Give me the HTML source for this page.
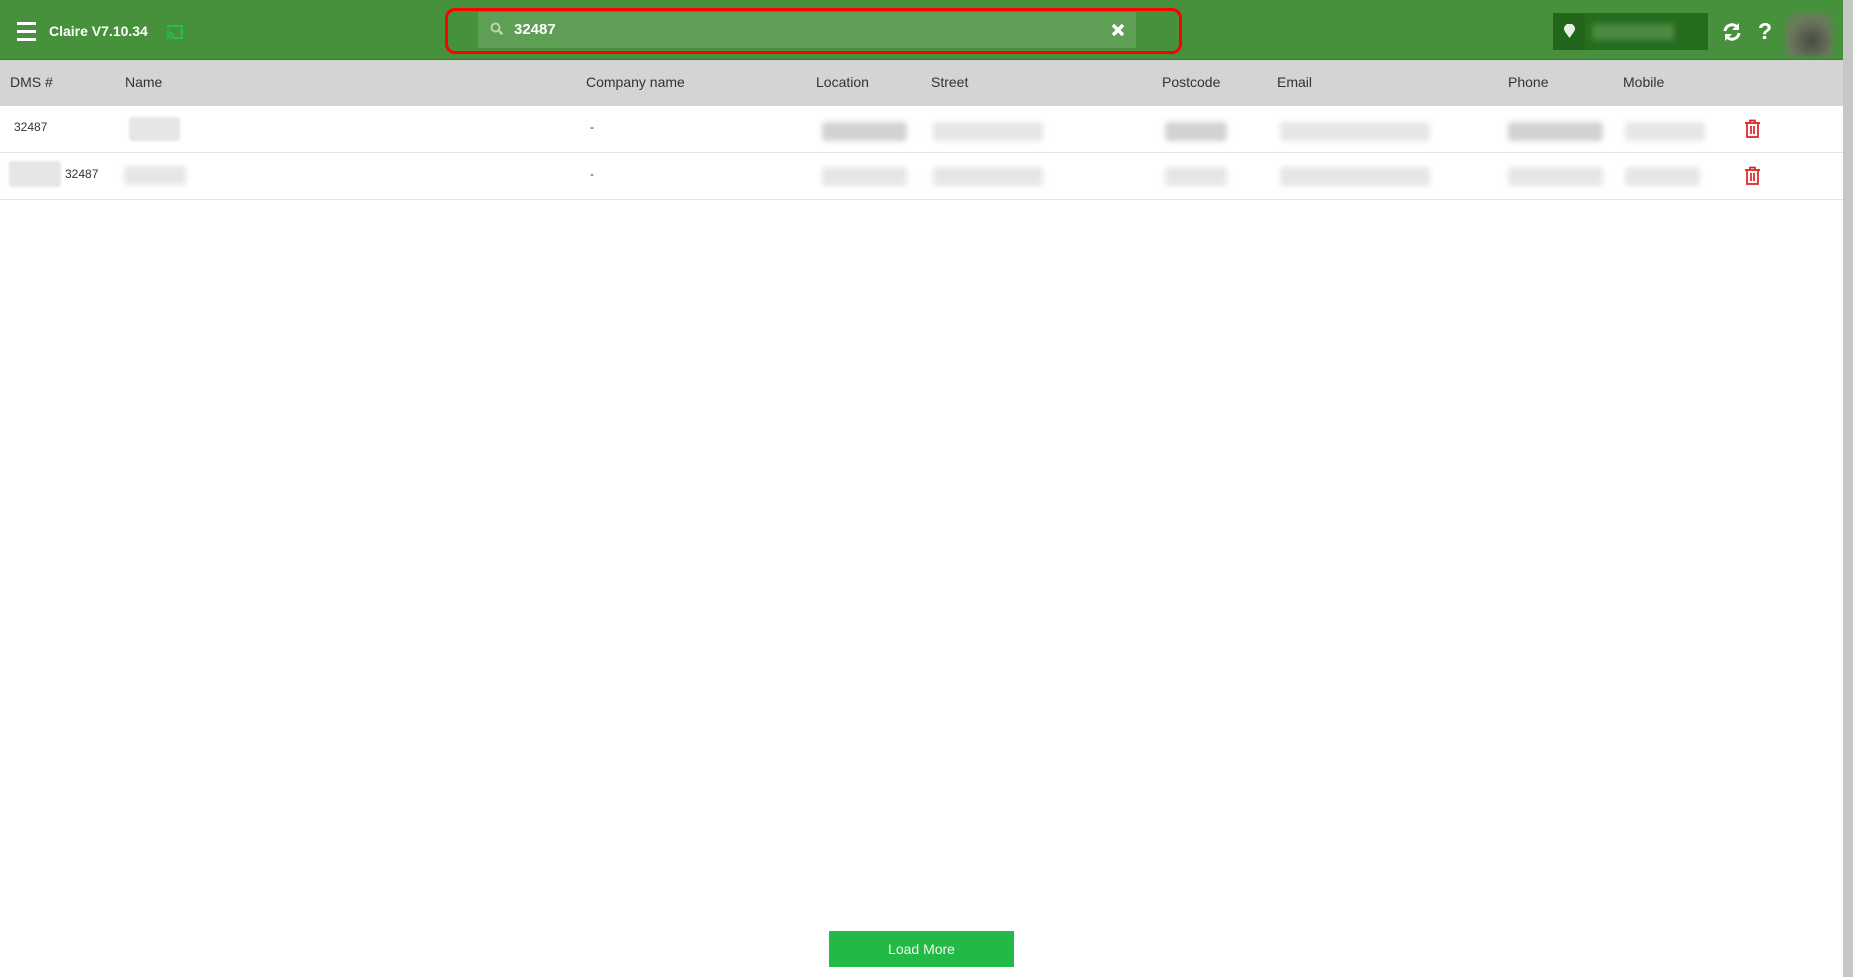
<!DOCTYPE html>
<html><head><meta charset="utf-8"><style>
*{margin:0;padding:0;box-sizing:border-box}
body{width:1853px;height:977px;overflow:hidden;background:#fff;font-family:"Liberation Sans",sans-serif;position:relative;color:#333}
.hdr{position:absolute;left:0;top:0;width:1843px;height:60px;background:#47913c;border-bottom:1px solid #3a7d30}
.abs{position:absolute}
.th{position:absolute;top:60px;left:0;width:1843px;height:46px;background:#d4d4d4}
.th span{position:absolute;top:14px;font-size:14px;color:#333}
.row{position:absolute;left:0;width:1843px;height:47px;border-bottom:1px solid #e4e4e4}
.bl{position:absolute;height:19px;background:#e6e6e6;filter:blur(3px);border-radius:3px}
.dk{background:#d2d2d2}
.td{position:absolute;font-size:12px;color:#333}
.sb{position:absolute;left:1843px;top:0;width:10px;height:977px;background:#c6c6c6}
</style></head><body>
<div class="hdr">
  <div class="abs" style="left:17px;top:22px;width:19px;height:3px;background:#fff"></div>
  <div class="abs" style="left:17px;top:30px;width:19px;height:3px;background:#fff"></div>
  <div class="abs" style="left:17px;top:38px;width:19px;height:3px;background:#fff"></div>
  <div class="abs" style="left:49px;top:23px;color:#fff;font-weight:bold;font-size:14px">Claire V7.10.34</div>
  <svg class="abs" style="left:166px;top:24px" width="18" height="16" viewBox="0 0 18 16"><path d="M2 5V2h14v12H9" fill="none" stroke="#22c04a" stroke-width="2"/><path d="M1 8a7 7 0 0 1 7 7M1 11a4 4 0 0 1 4 4" fill="none" stroke="#22c04a" stroke-width="2"/><circle cx="1.5" cy="14.5" r="1.3" fill="#22c04a"/></svg>
  <div class="abs" style="left:445px;top:8px;width:737px;height:46px;border:3px solid #f00;border-radius:10px"></div>
  <div class="abs" style="left:478px;top:12px;width:658px;height:36px;background:#5f9e55"></div>
  <svg class="abs" style="left:490px;top:22px" width="14" height="14" viewBox="0 0 14 14"><circle cx="5.5" cy="5.5" r="4" fill="none" stroke="#b9d6b3" stroke-width="2"/><path d="M8.5 8.5l4 4" stroke="#b9d6b3" stroke-width="2.5"/></svg>
  <div class="abs" style="left:514px;top:21px;color:#fff;font-weight:bold;font-size:15px">32487</div>
  <svg class="abs" style="left:1111px;top:23px" width="14" height="14" viewBox="0 0 14 14"><path d="M2 2l10 10M12 2L2 12" stroke="#fff" stroke-width="3.5"/></svg>
  <div class="abs" style="left:1553px;top:13px;width:155px;height:37px;background:#256d1e"></div>
  <div class="abs" style="left:1553px;top:13px;width:32px;height:37px;background:#22651b"></div>
  <svg class="abs" style="left:1564px;top:24px" width="11" height="14" viewBox="0 0 11 14"><path d="M5.5 14C2 9 0 7 0 5a5.5 5.5 0 0 1 11 0c0 2-2 4-5.5 9z" fill="#e8f0e6"/></svg>
  <div class="abs" style="left:1592px;top:24px;width:82px;height:16px;background:#4c8a43;filter:blur(3px)"></div>
  <svg class="abs" style="left:1722px;top:22px" width="20" height="20" viewBox="0 0 20 20"><path d="M3 9a7 7 0 0 1 12-4" fill="none" stroke="#fff" stroke-width="3"/><path d="M17 1v7h-7z" fill="#fff"/><path d="M17 11a7 7 0 0 1-12 4" fill="none" stroke="#fff" stroke-width="3"/><path d="M3 19v-7h7z" fill="#fff"/></svg>
  <div class="abs" style="left:1758px;top:18px;color:#fff;font-weight:bold;font-size:23px">?</div>
  <div class="abs" style="left:1786px;top:13px;width:46px;height:43px;background:radial-gradient(circle at 55% 65%,#4a4a44,#6d7a5e 60%,#4e8a45);filter:blur(2px)"></div>
</div>
<div class="th">
  <span style="left:10px">DMS #</span><span style="left:125px">Name</span><span style="left:586px">Company name</span><span style="left:816px">Location</span><span style="left:931px">Street</span><span style="left:1162px">Postcode</span><span style="left:1277px">Email</span><span style="left:1508px">Phone</span><span style="left:1623px">Mobile</span>
</div>
<div class="row" style="top:106px">
  <div class="td" style="left:14px;top:14px">32487</div>
  <div class="bl" style="left:129px;top:11px;width:51px;height:24px;filter:blur(1px)"></div>
  <div class="td" style="left:590px;top:14px">-</div>
  <div class="bl dk" style="left:822px;top:16px;width:85px"></div>
  <div class="bl" style="left:933px;top:16px;width:110px"></div>
  <div class="bl dk" style="left:1165px;top:16px;width:62px"></div>
  <div class="bl" style="left:1280px;top:16px;width:150px"></div>
  <div class="bl dk" style="left:1508px;top:16px;width:95px"></div>
  <div class="bl" style="left:1625px;top:16px;width:80px"></div>
</div>
<div class="row" style="top:153px">
  <div class="bl" style="left:9px;top:8px;width:52px;height:26px;filter:blur(1px)"></div>
  <div class="td" style="left:65px;top:14px">32487</div>
  <div class="bl" style="left:124px;top:13px;width:62px"></div>
  <div class="td" style="left:590px;top:14px">-</div>
  <div class="bl" style="left:822px;top:14px;width:85px"></div>
  <div class="bl" style="left:933px;top:14px;width:110px"></div>
  <div class="bl" style="left:1165px;top:14px;width:62px"></div>
  <div class="bl" style="left:1280px;top:14px;width:150px"></div>
  <div class="bl" style="left:1508px;top:14px;width:95px"></div>
  <div class="bl" style="left:1625px;top:14px;width:75px"></div>
</div>
<svg class="abs" style="left:1744px;top:119px" width="17" height="19" viewBox="0 0 17 19"><path d="M1 4h15M6 4V1.5h5V4M3 4v14h11V4M7 7v8M10 7v8" fill="none" stroke="#e02020" stroke-width="1.7"/></svg>
<svg class="abs" style="left:1744px;top:166px" width="17" height="19" viewBox="0 0 17 19"><path d="M1 4h15M6 4V1.5h5V4M3 4v14h11V4M7 7v8M10 7v8" fill="none" stroke="#e02020" stroke-width="1.7"/></svg>
<div class="abs" style="left:829px;top:931px;width:185px;height:36px;background:#22b947;color:#f0f8f0;font-size:14px;text-align:center;line-height:36px">Load More</div>
<div class="sb"></div>
</body></html>
